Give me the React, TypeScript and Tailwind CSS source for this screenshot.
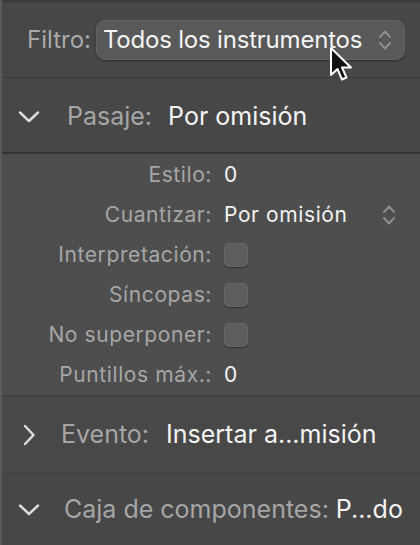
import React from 'react';

const ChevronDown = () => (
  <svg width="22" height="14" viewBox="0 0 22 14" fill="none">
    <path d="M2 2.5 L11 11 L20 2.5" stroke="#dcdcdc" strokeWidth="2.5" strokeLinecap="round" strokeLinejoin="round" />
  </svg>
);

const ChevronRight = () => (
  <svg width="14" height="22" viewBox="0 0 14 22" fill="none">
    <path d="M3 2 L11.5 11 L3 20" stroke="#dcdcdc" strokeWidth="2.5" strokeLinecap="round" strokeLinejoin="round" />
  </svg>
);

const UpDown = () => (
  <svg width="14" height="24" viewBox="0 0 14 24" fill="none">
    <path d="M2 9 L7 3.5 L12 9" stroke="#8e8e8e" strokeWidth="2" strokeLinecap="round" strokeLinejoin="round" />
    <path d="M2 15 L7 20.5 L12 15" stroke="#8e8e8e" strokeWidth="2" strokeLinecap="round" strokeLinejoin="round" />
  </svg>
);

const Cursor = () => (
  <svg width="30" height="40" viewBox="0 0 30 40" className="absolute left-[325px] top-[46px]">
    <path d="M4 2 L4 29 L10.5 23 L15 33.5 L19.5 31.5 L15 21.5 L24 21.5 Z" fill="#111" stroke="#fff" strokeWidth="2" strokeLinejoin="round" />
  </svg>
);

const Checkbox = () => (
  <div className="w-6 h-6 rounded-[5px] bg-[#5e5e5e] border border-[#666] shadow-[0_1px_1px_rgba(0,0,0,0.35)]" />
);

interface RowProps {
  label: string;
  children: React.ReactNode;
}

const Row: React.FC<RowProps> = ({ label, children }) => (
  <div className="flex items-center h-10">
    <span className="w-[222px] text-right text-[#a6a6a6] pr-[12px] whitespace-nowrap">{label}</span>
    <div className="flex-1 flex items-center text-[#f2f2f2]">{children}</div>
  </div>
);

export default function App() {
  return (
    <div
      className="w-[420px] h-[545px] bg-[#474747] overflow-hidden relative border-l-2 border-[#5a5a5a]"
      style={{ fontFamily: 'Inter, "Liberation Sans", sans-serif' }}
    >
      <div className="h-[3px] bg-[#3d3d3d]" />

      {/* Filtro */}
      <div className="h-[75px] flex items-center pl-[25px] border-b border-[#3b3b3b]">
        <span className="text-[24px] text-[#a9a9a9] mr-[5px]">Filtro:</span>
        <div className="w-[309px] h-[40px] rounded-[9px] bg-[#595959] border border-[#636363] shadow-[0_1px_2px_rgba(0,0,0,0.4)] flex items-center pl-[6px] pr-[12px]">
          <span className="flex-1 text-[24px] text-[#f4f4f4] tracking-[-0.2px] whitespace-nowrap">Todos los instrumentos</span>
          <UpDown />
        </div>
      </div>

      {/* Pasaje header */}
      <div className="h-[74px] flex items-center pl-[16px] pt-[3px] text-[25px]">
        <ChevronDown />
        <span className="ml-[27px] text-[#a6a6a6]">Pasaje:</span>
        <span className="ml-[16px] text-[#f4f4f4]">Por omisión</span>
      </div>

      {/* Pasaje body */}
      <div className="border-t-2 border-[#333] bg-[#4e4e4e] text-[21px] tracking-[0.6px] pt-[1px] border-b border-b-[#3c3c3c]">
        <Row label="Estilo:">0</Row>
        <Row label="Cuantizar:">
          <span className="flex-1">Por omisión</span>
          <span className="mr-[24px]"><UpDown /></span>
        </Row>
        <Row label="Interpretación:"><Checkbox /></Row>
        <Row label="Síncopas:"><Checkbox /></Row>
        <Row label="No superponer:"><Checkbox /></Row>
        <Row label="Puntillos máx.:">0</Row>
      </div>

      {/* Evento */}
      <div className="h-[78px] flex items-center pl-[20px] text-[25px] border-b border-[#3e3e3e] bg-[#484848]">
        <ChevronRight />
        <span className="ml-[25px] text-[#a6a6a6]">Evento:</span>
        <span className="ml-[17px] text-[#f4f4f4] whitespace-nowrap">Insertar a...misión</span>
      </div>

      {/* Caja */}
      <div className="h-[72px] flex items-center pl-[16px] text-[25px] whitespace-nowrap">
        <ChevronDown />
        <span className="ml-[24px] text-[#a6a6a6]">Caja de componentes:</span>
        <span className="ml-[7px] text-[#f4f4f4]">P...do</span>
      </div>

      <Cursor />
    </div>
  );
}
